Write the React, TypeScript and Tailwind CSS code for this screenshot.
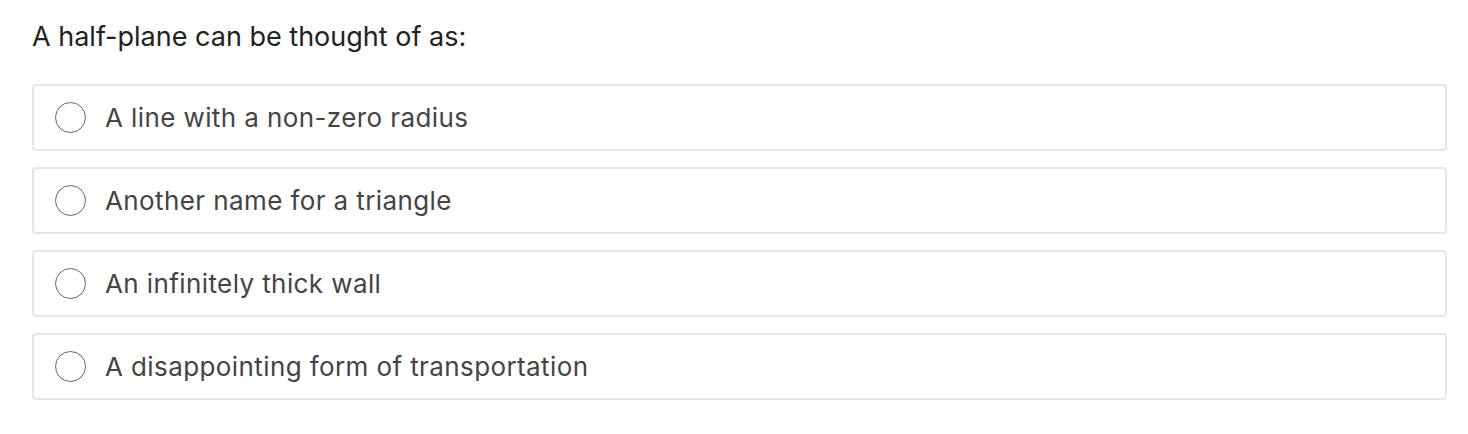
import React from "react";

const options = [
  "A line with a non-zero radius",
  "Another name for a triangle",
  "An infinitely thick wall",
  "A disappointing form of transportation",
];

export default function App() {
  return (
    <div
      className="w-[1468px] h-[434px] bg-white pl-[32px] pr-[21px] pt-[18px]"
      style={{ fontFamily: "Inter, 'Liberation Sans', sans-serif" }}
    >
      <div className="text-[27px] leading-[38px] text-[#222222]">
        A half-plane can be thought of as:
      </div>
      <div className="mt-[28px] flex flex-col gap-[16px]">
        {options.map((o) => (
          <div
            key={o}
            className="h-[67px] rounded-[4px] border-2 border-[#e6e6e6] flex items-center pl-[21px]"
          >
            <div className="w-[31px] h-[31px] rounded-full border-[1.5px] border-[#666666] shrink-0" />
            <div className="ml-[19px] text-[26px] tracking-[0.4px] text-[#444444]">{o}</div>
          </div>
        ))}
      </div>
    </div>
  );
}
